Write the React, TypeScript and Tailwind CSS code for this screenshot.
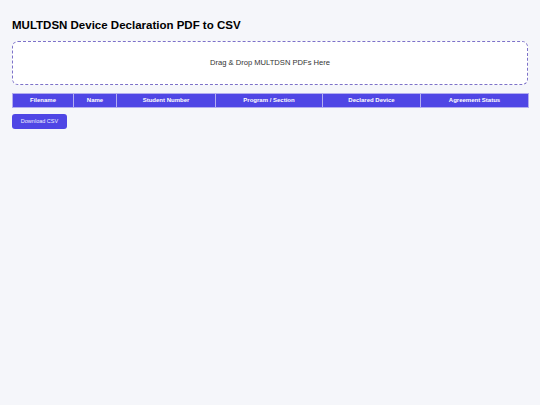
import React from "react";

const columns = [
  { label: "Filename", width: "w-[61px]" },
  { label: "Name", width: "w-[43px]" },
  { label: "Student Number", width: "w-[99px]" },
  { label: "Program / Section", width: "w-[107px]" },
  { label: "Declared Device", width: "w-[98px]" },
  { label: "Agreement Status", width: "w-[108px]" },
];

export default function App() {
  return (
    <div className="min-h-screen bg-[#f5f6fa] px-3 pt-[17px] font-['Liberation_Sans',Arial,sans-serif] text-[#111]">
      <h1 className="text-[11.5px] font-bold leading-[16px] text-black">
        MULTDSN Device Declaration PDF to CSV
      </h1>

      {/* Drop zone */}
      <div className="mt-[8px] flex h-[44px] items-center justify-center rounded-[6px] border border-dashed border-[#7d72c9] bg-white text-[7.6px] text-[#333]">
        Drag &amp; Drop MULTDSN PDFs Here
      </div>

      {/* Table */}
      <table className="mt-[8px] w-full table-fixed border-collapse">
        <thead>
          <tr>
            {columns.map((col) => (
              <th
                key={col.label}
                className={`${col.width} h-[14px] border border-[#b3adf0] bg-[#4f46e5] p-0 text-center text-[6px] font-bold text-white`}
              >
                {col.label}
              </th>
            ))}
          </tr>
        </thead>
      </table>

      <button
        type="button"
        className="mt-[6px] block h-[15px] w-[55px] rounded-[3px] bg-[#4f46e5] text-[5.5px] text-[#eef]"
      >
        Download CSV
      </button>
    </div>
  );
}
